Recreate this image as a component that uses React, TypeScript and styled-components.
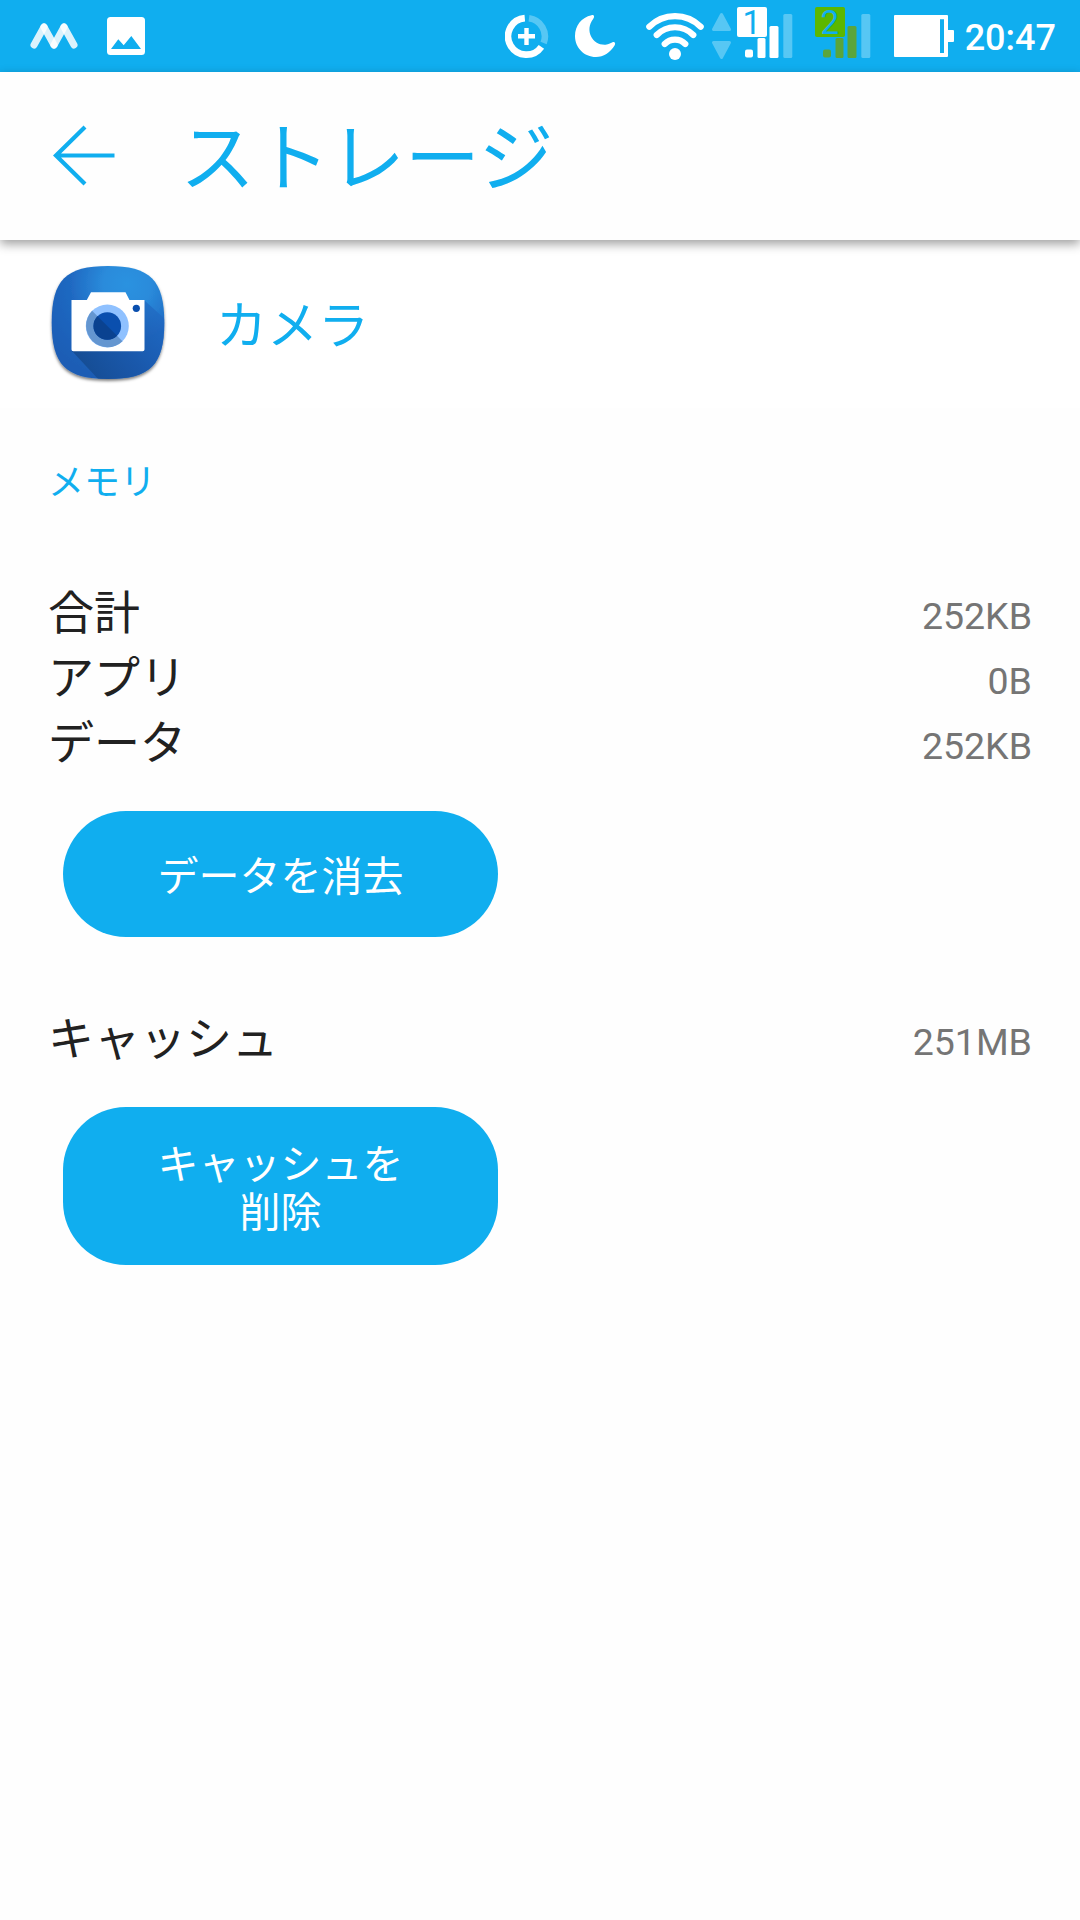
import React from 'react';
import styled, { createGlobalStyle } from 'styled-components';

const BLUE = '#10aeef';
const JP = `"Noto Sans CJK JP", "Noto Sans", sans-serif`;
const LATIN = `Roboto, "Noto Sans", sans-serif`;

const GlobalStyle = createGlobalStyle`
  * { box-sizing: border-box; }
  body { margin: 0; background: #fefefe; }
`;

const Screen = styled.div`
  display: flex;
  flex-direction: column;
  width: 1080px;
  height: 1920px;
  background: #fefefe;
  font-family: ${JP};
  overflow: hidden;
`;

const StatusBar = styled.header`
  display: flex;
  justify-content: space-between;
  flex: none;
  height: 72px;
  padding: 0 24px 0 30px;
  background: ${BLUE};
`;

const StatusGroup = styled.div`
  display: flex;
  align-items: stretch;
`;

const Glyph = styled.svg<{ $gap?: number }>`
  display: block;
  flex: none;
  margin-left: ${(p) => p.$gap ?? 0}px;
`;

const Sim = styled.div<{ $gap: number }>`
  display: grid;
  flex: none;
  width: 56px;
  height: 72px;
  margin-left: ${(p) => p.$gap}px;

  & > * {
    grid-area: 1 / 1;
  }
`;

const SimNumber = styled.span<{ $color: string }>`
  width: 30px;
  height: 30px;
  margin-top: 7px;
  border-radius: 2px;
  background: ${(p) => p.$color};
  color: ${BLUE};
  font: 400 33px/31px ${LATIN};
  text-align: center;
`;

const Clock = styled.time`
  margin-left: 10px;
  color: #fff;
  font: 500 36px/76px ${LATIN};
`;

const AppBar = styled.div`
  display: flex;
  align-items: center;
  flex: none;
  height: 168px;
  padding-left: 50px;
  background: #fefefe;
  box-shadow: 0 4px 10px rgba(0, 0, 0, 0.38);
  z-index: 1;
`;

const BackButton = styled.button`
  display: block;
  width: 70px;
  height: 70px;
  padding: 0;
  border: 0;
  background: none;
`;

const Title = styled.h1`
  margin: 0 0 6px 60px;
  color: ${BLUE};
  font-size: 75px;
  font-weight: 400;
  line-height: 108px;
`;

const AppHeader = styled.section`
  display: flex;
  align-items: center;
  flex: none;
  height: 168px;
  padding: 2px 0 0 48px;
  background: #fff;
`;

const AppName = styled.h2`
  margin: 0 0 7px 46px;
  color: ${BLUE};
  font-size: 51px;
  font-weight: 400;
  line-height: 74px;
`;

const Content = styled.main`
  display: flex;
  flex-direction: column;
  padding: 0 48px;
`;

const SectionLabel = styled.h3`
  margin: 45px 0 72px;
  color: ${BLUE};
  font-size: 36px;
  font-weight: 400;
  line-height: 52px;
`;

const Row = styled.div`
  display: flex;
  align-items: baseline;
  justify-content: space-between;
  height: 65px;
  color: #212121;
  font-size: 46px;
  line-height: 65px;
`;

const Value = styled.span`
  color: #757575;
  font-family: ${LATIN};
  font-size: 37.5px;
`;

const PillButton = styled.button<{ $height: number; $after?: number }>`
  display: flex;
  align-items: center;
  justify-content: center;
  width: 435px;
  height: ${(p) => p.$height}px;
  margin: 39px 0 ${(p) => p.$after ?? 0}px 15px;
  padding: 0 80px 2px;
  border: 0;
  border-radius: 63px;
  background: ${BLUE};
  color: #fff;
  font-family: ${JP};
  font-size: 41px;
  line-height: 48px;
  text-align: center;
`;

function SimSignal({ label, color, bars, gap }: { label: string; color: string; bars: string; gap: number }) {
  return (
    <Sim $gap={gap}>
      <SimNumber $color={color}>{label}</SimNumber>
      <Glyph width="56" height="72" viewBox="0 0 56 72">
        <g fill={bars}>
          <rect x="8" y="49.5" width="8" height="8" rx="2" />
          <rect x="20.5" y="38" width="8" height="20" rx="1.5" />
          <rect x="32.5" y="26" width="9" height="32" rx="1.5" />
        </g>
        <rect x="46.3" y="14" width="9" height="44" rx="1.5" fill="#57c7f4" />
      </Glyph>
    </Sim>
  );
}

function CameraIcon() {
  return (
    <Glyph width="122" height="126" viewBox="0 0 122 126">
      <defs>
        <radialGradient id="face" cx="0.67" cy="0.16" r="0.85">
          <stop offset="0" stopColor="#2c92e0" />
          <stop offset="0.25" stopColor="#2a8bdb" />
          <stop offset="0.6" stopColor="#1f68c1" />
          <stop offset="1" stopColor="#1c5db5" />
        </radialGradient>
        <linearGradient id="cast" x1="0" y1="0.8" x2="1" y2="0.3">
          <stop offset="0" stopColor="#14498c" stopOpacity="0.9" />
          <stop offset="0.55" stopColor="#1955a6" stopOpacity="0.75" />
          <stop offset="1" stopColor="#1f66c0" stopOpacity="0.6" />
        </linearGradient>
        <clipPath id="tile">
          <path d="M60 4C102 4 116.3 18 116.3 60.5S102 117 60 117S3.7 103 3.7 60.5S18 4 60 4Z" />
        </clipPath>
        <filter id="drop" x="-10%" y="-10%" width="120%" height="125%">
          <feDropShadow dx="0" dy="2" stdDeviation="1.5" floodColor="#000" floodOpacity="0.5" />
        </filter>
      </defs>
      <path d="M60 4C102 4 116.3 18 116.3 60.5S102 117 60 117S3.7 103 3.7 60.5S18 4 60 4Z" fill="url(#face)" filter="url(#drop)" />
      <path clipPath="url(#tile)" d="M24 89L51 118H118V58L96 38Z" fill="url(#cast)" />
      <path d="M23.5 38H38.8L43 30.3H77.5L81.5 38H96.5V87.5Q96.5 89.3 94.7 89.3H25.3Q23.5 89.3 23.5 87.5Z" fill="#fff" />
      <circle cx="59.3" cy="64" r="21.5" fill="#8fc1ff" />
      <path d="M44.1 48.8A21.5 21.5 0 0 0 74.5 79.2Z" fill="#6496d0" />
      <circle cx="59.3" cy="64" r="13.8" fill="#0a4fae" />
      <path d="M49.5 54.2A13.8 13.8 0 0 0 69.1 73.8Z" fill="#0a4290" />
      <circle cx="88.3" cy="46.3" r="3.6" fill="#0a4fae" />
    </Glyph>
  );
}

export default function App() {
  return (
    <>
      <GlobalStyle />
      <Screen>
        <StatusBar>
          <StatusGroup>
            <Glyph width="48" height="72" viewBox="30 0 48 72" stroke="#fff" strokeWidth="7" strokeLinecap="round">
              <path d="M34 45L44 27" opacity="0.85" />
              <path d="M44 27L54 45" opacity="0.85" />
              <path d="M54 45L64 27" opacity="0.85" />
              <path d="M64 27L74 45" opacity="0.85" />
            </Glyph>
            <Glyph $gap={29} width="38" height="72" viewBox="107 0 38 72">
              <rect x="107" y="17" width="38" height="38" rx="3.5" fill="#fff" />
              <path d="M111 49L118.3 39.3L123.7 45.2L131.3 36L141 49Z" fill={BLUE} />
            </Glyph>
          </StatusGroup>
          <StatusGroup>
            <Glyph width="44" height="72" viewBox="505 0 44 72" fill="none" strokeWidth="6.6">
              <path d="M524.8 18.1A18.3 18.3 0 1 0 541.4 46.8" stroke="#fff" />
              <path d="M529 18.2A18.3 18.3 0 0 1 543.6 43" stroke="#57c7f4" />
              <path d="M526.5 28V45M518 36.3H535" stroke="#fff" strokeWidth="4.4" />
            </Glyph>
            <Glyph $gap={25} width="42" height="72" viewBox="574 0 42 72">
              <path
                d="M591.5 15.2C594 14.4 595 16.5 593.3 18.8C584 31 593 45.5 605.5 44.8C609 44.4 611 42.6 613 42C615 41.7 615.7 43.4 614.7 45.3C610 53 603.5 57 596 57C584 57 575 47.5 575 36C575 25.5 581.5 17.5 591.5 15.2Z"
                fill="#fff"
              />
            </Glyph>
            <Glyph $gap={29} width="60" height="72" viewBox="645 0 60 72" fill="none" stroke="#fff" strokeWidth="6.2" strokeLinecap="round">
              <path d="M649.3 26.7A36.5 36.5 0 0 1 700.7 26.7" />
              <path d="M656.7 35A25.5 25.5 0 0 1 693.3 35" />
              <path d="M664.7 44A14.5 14.5 0 0 1 685.3 44" />
              <circle cx="675" cy="54" r="6" fill="#fff" stroke="none" />
            </Glyph>
            <Glyph $gap={6} width="20" height="72" viewBox="711 0 20 72" fill="#57c7f4" stroke="#57c7f4" strokeWidth="3" strokeLinejoin="round">
              <path d="M721.5 14.5L713.5 29.5H729.5Z" />
              <path d="M721.5 57.5L713.5 42.5H729.5Z" />
            </Glyph>
            <SimSignal gap={6} label="1" color="#fff" bars="#fff" />
            <SimSignal gap={22} label="2" color="#5cb700" bars="#5aa53c" />
            <Glyph $gap={23} width="61" height="72" viewBox="894 0 61 72">
              <path
                d="M895 15H947Q948 15 948 16V30H953Q954 30 954 31V41Q954 42 953 42H948V56Q948 57 947 57H895Q894 57 894 56V16Q894 15 895 15ZM940 19.3V53H944V19.3Z"
                fill="#fff"
                fillRule="evenodd"
              />
            </Glyph>
            <Clock>20:47</Clock>
          </StatusGroup>
        </StatusBar>

        <AppBar>
          <BackButton aria-label="戻る">
            <Glyph width="70" height="70" viewBox="50 121 70 70" fill="none" stroke={BLUE} strokeWidth="4.2">
              <path d="M85 127L56 155.5L85 184M56 155.5H114.5" />
            </Glyph>
          </BackButton>
          <Title>ストレージ</Title>
        </AppBar>

        <AppHeader>
          <CameraIcon />
          <AppName>カメラ</AppName>
        </AppHeader>

        <Content>
          <SectionLabel>メモリ</SectionLabel>
          <Row>合計<Value>252KB</Value></Row>
          <Row>アプリ<Value>0B</Value></Row>
          <Row>データ<Value>252KB</Value></Row>
          <PillButton $height={126} $after={66}>データを消去</PillButton>
          <Row>キャッシュ<Value>251MB</Value></Row>
          <PillButton $height={158}>キャッシュを<br />削除</PillButton>
        </Content>
      </Screen>
    </>
  );
}
